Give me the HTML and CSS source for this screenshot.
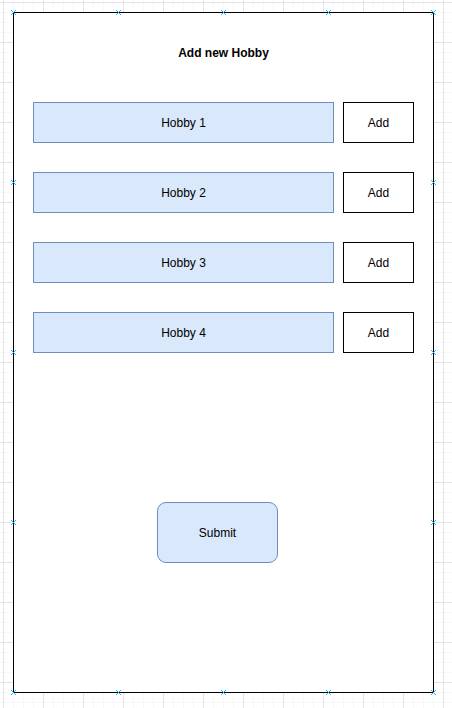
FILE: index.html
```html
<!DOCTYPE html>
<html lang="en">
<head>
<meta charset="utf-8">
<meta name="viewport" content="width=device-width, initial-scale=1">
<title>Add new Hobby</title>
<link rel="stylesheet" href="styles.css">
</head>
<body>
<svg class="defs" aria-hidden="true">
  <symbol id="cross" viewBox="0 0 5 5"><path d="M0 0L5 5M5 0L0 5"/></symbol>
</svg>
<main class="frame">
  <h1 class="title">Add new Hobby</h1>
  <form class="form">
    <ul class="hobbies">
      <li class="hobby"><span class="name">Hobby 1</span><button class="add" type="button">Add</button></li>
      <li class="hobby"><span class="name">Hobby 2</span><button class="add" type="button">Add</button></li>
      <li class="hobby"><span class="name">Hobby 3</span><button class="add" type="button">Add</button></li>
      <li class="hobby"><span class="name">Hobby 4</span><button class="add" type="button">Add</button></li>
    </ul>
    <div class="actions"><button class="submit" type="submit">Submit</button></div>
  </form>
  <div class="anchors" aria-hidden="true">
    <svg class="anchor x0 y0"><use href="#cross"/></svg>
    <svg class="anchor x1 y0"><use href="#cross"/></svg>
    <svg class="anchor x2 y0"><use href="#cross"/></svg>
    <svg class="anchor x3 y0"><use href="#cross"/></svg>
    <svg class="anchor x4 y0"><use href="#cross"/></svg>
    <svg class="anchor x0 y1"><use href="#cross"/></svg>
    <svg class="anchor x4 y1"><use href="#cross"/></svg>
    <svg class="anchor x0 y2"><use href="#cross"/></svg>
    <svg class="anchor x4 y2"><use href="#cross"/></svg>
    <svg class="anchor x0 y3"><use href="#cross"/></svg>
    <svg class="anchor x4 y3"><use href="#cross"/></svg>
    <svg class="anchor x0 y4"><use href="#cross"/></svg>
    <svg class="anchor x1 y4"><use href="#cross"/></svg>
    <svg class="anchor x2 y4"><use href="#cross"/></svg>
    <svg class="anchor x3 y4"><use href="#cross"/></svg>
    <svg class="anchor x4 y4"><use href="#cross"/></svg>
  </div>
</main>
</body>
</html>
```
FILE: styles.css
```css
* {
  box-sizing: border-box;
}

body {
  margin: 0;
  min-height: 100vh;
  padding: 12px 18px 15px 13px;
  display: flex;
  font: 12px/20px "Liberation Sans", Arial, sans-serif;
  color: #000;
  background-color: #fff;
  background-image:
    linear-gradient(to right, #e4e4e4 1px, transparent 1px),
    linear-gradient(to bottom, #e4e4e4 1px, transparent 1px),
    linear-gradient(to right, #f8f8f8 1px, transparent 1px),
    linear-gradient(to bottom, #f8f8f8 1px, transparent 1px);
  background-size: 40px 40px, 40px 40px, 10px 10px, 10px 10px;
  background-position: 3px 2px;
}

.defs {
  position: absolute;
  width: 0;
  height: 0;
}

.frame {
  position: relative;
  flex: 1;
  padding: 30px 19px;
  border: 1px solid #000;
  background: #fff;
}

.title {
  margin: 0 0 39px;
  font-size: 12px;
  line-height: 20px;
  text-align: center;
}

.hobbies {
  display: grid;
  gap: 29px;
  margin: 0;
  padding: 0;
  list-style: none;
}

.hobby {
  display: flex;
  gap: 9px;
}

.name,
.add,
.submit {
  display: flex;
  align-items: center;
  justify-content: center;
  padding: 9px;
  border: 1px solid #6c8ebf;
  background: #dae8fc;
  color: #000;
  font: inherit;
}

.name {
  flex: 1;
  min-height: 41px;
}

.add {
  width: 71px;
  border-color: #000;
  background: #fff;
}

.actions {
  display: flex;
  justify-content: center;
  margin-top: 149px;
  padding-right: 12px;
}

.submit {
  width: 121px;
  min-height: 61px;
  border-radius: 9px;
}

.anchors {
  position: absolute;
  inset: -1px 0 0 -1px;
  pointer-events: none;
}

.anchor {
  position: absolute;
  width: 5px;
  height: 5px;
  margin: -2px 0 0 -2px;
  stroke: #29b6f2;
  stroke-width: 1;
}

.x0 { left: 0; }
.x1 { left: 25%; }
.x2 { left: 50%; }
.x3 { left: 75%; }
.x4 { left: 100%; }

.y0 { top: 0; }
.y1 { top: 25%; }
.y2 { top: 50%; }
.y3 { top: 75%; }
.y4 { top: 100%; }
```
